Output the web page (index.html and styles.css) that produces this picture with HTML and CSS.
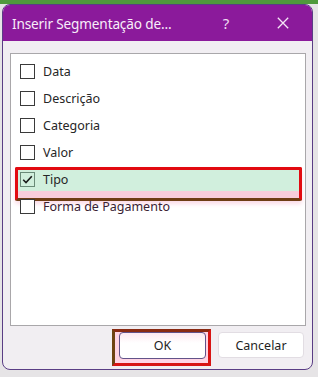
FILE: index.html
```html
<!DOCTYPE html>
<html lang="pt">
<head>
<meta charset="utf-8">
<link rel="stylesheet" href="styles.css">
</head>
<body>
<div class="dialog">
  <div class="titlebar">
    <span class="title">Inserir Segmentação de...</span>
    <span class="tb-btn help">?</span>
    <span class="tb-btn close">
      <svg width="12" height="12" viewBox="0 0 12 12"><path d="M0.8 0.8 L11.2 11.2 M11.2 0.8 L0.8 11.2" stroke="#f4e6f6" stroke-width="1.3" fill="none"/></svg>
    </span>
  </div>
  <div class="listbox">
    <div class="row"><span class="cb"></span><span class="lbl">Data</span></div>
    <div class="row"><span class="cb"></span><span class="lbl">Descrição</span></div>
    <div class="row"><span class="cb"></span><span class="lbl">Categoria</span></div>
    <div class="row"><span class="cb"></span><span class="lbl">Valor</span></div>
    <div class="row selected"><span class="cb checked"><svg width="13" height="13" viewBox="0 0 13 13"><path d="M2.2 6.8 L5 9.6 L10.8 3.2" stroke="#1a1a1a" stroke-width="1.6" fill="none"/></svg></span><span class="lbl">Tipo</span></div>
    <div class="row after-sel"><span class="cb"></span><span class="lbl">Forma de Pagamento</span></div>
  </div>
  <div class="footer">
    <button class="btn ok">OK</button>
    <button class="btn cancel">Cancelar</button>
  </div>
</div>
</body>
</html>
```

FILE: styles.css
```css
html, body {
  margin: 0;
  padding: 0;
}
body {
  width: 318px;
  height: 377px;
  overflow: hidden;
  background: linear-gradient(#4f9a3c 0 4px, #e6e4e6 4px);
  font-family: "Noto Sans", "Open Sans", sans-serif;
}
.dialog {
  box-sizing: border-box;
  margin: 4px 0 0 2px;
  width: 311px;
  height: 366px;
  border: 1px solid #5a3d85;
  border-radius: 8px;
  overflow: hidden;
  background: #f1eef2;
  display: flex;
  flex-direction: column;
}
.titlebar {
  height: 36px;
  flex: none;
  background: #8b1a9b;
  display: flex;
  align-items: center;
  padding-left: 9px;
  color: #fff;
}
.title {
  flex: 1;
  font-size: 13.6px;
  letter-spacing: -0.15px;
  color: #f8eef9;
}
.tb-btn {
  width: 46px;
  height: 36px;
  display: flex;
  align-items: center;
  justify-content: center;
  color: #f0dff3;
}
.help {
  font-size: 15px;
  margin-right: 11px;
}
.close {
  margin-right: 6px;
}
.listbox {
  position: relative;
  z-index: 0;
  box-sizing: border-box;
  margin: 12px 0 0 7px;
  width: 296px;
  height: 273px;
  border: 1px solid #a9a7aa;
  background: #fff;
  padding-top: 4px;
}
.row {
  position: relative;
  height: 27px;
  display: flex;
  align-items: center;
  padding-left: 9px;
  font-size: 12.5px;
  color: #262626;
}
.cb {
  box-sizing: border-box;
  width: 15px;
  height: 15px;
  border: 1px solid #3a3a3a;
  margin-right: 8px;
  display: flex;
  align-items: center;
  justify-content: center;
  background: #fff;
}
.cb.checked {
  background: transparent;
  border-color: #6a8a78;
}
.selected::before {
  content: "";
  position: absolute;
  z-index: -1;
  left: 4px;
  right: 3px;
  top: 1px;
  height: 34px;
  box-sizing: border-box;
  border: 3px solid #e20a10;
  border-bottom-color: #6e3d14;
  border-radius: 2px;
  background: linear-gradient(#d1efdd 0 21px, #f8cddc 21px);
  box-shadow: 0 3px 4px #fbdbe7;
}
.after-sel {
  color: #3a2233;
}
.footer {
  position: relative;
  z-index: 0;
  display: flex;
  justify-content: flex-end;
  gap: 12px;
  padding: 6px 8px 0 0;
}
.btn {
  position: relative;
  box-sizing: border-box;
  height: 27px;
  border-radius: 4px;
  background: #fff;
  font-family: "Noto Sans", "Open Sans", sans-serif;
  font-size: 12.5px;
  color: #1e1e1e;
  padding: 0;
}
.ok {
  width: 87px;
  border: 1px solid #62538a;
  background: linear-gradient(#fde8f1, #ffffff 40%);
}
.ok::before {
  content: "";
  position: absolute;
  z-index: -1;
  left: -8px;
  right: -6px;
  top: -4px;
  bottom: -8px;
  border: 3px solid #d81414;
  border-top-color: #8a2a12;
  border-left-color: #6e4414;
  background: #ffd4e4;
}
.cancel {
  width: 86px;
  height: 26px;
  border: 1px solid #e2dde3;
}
```
